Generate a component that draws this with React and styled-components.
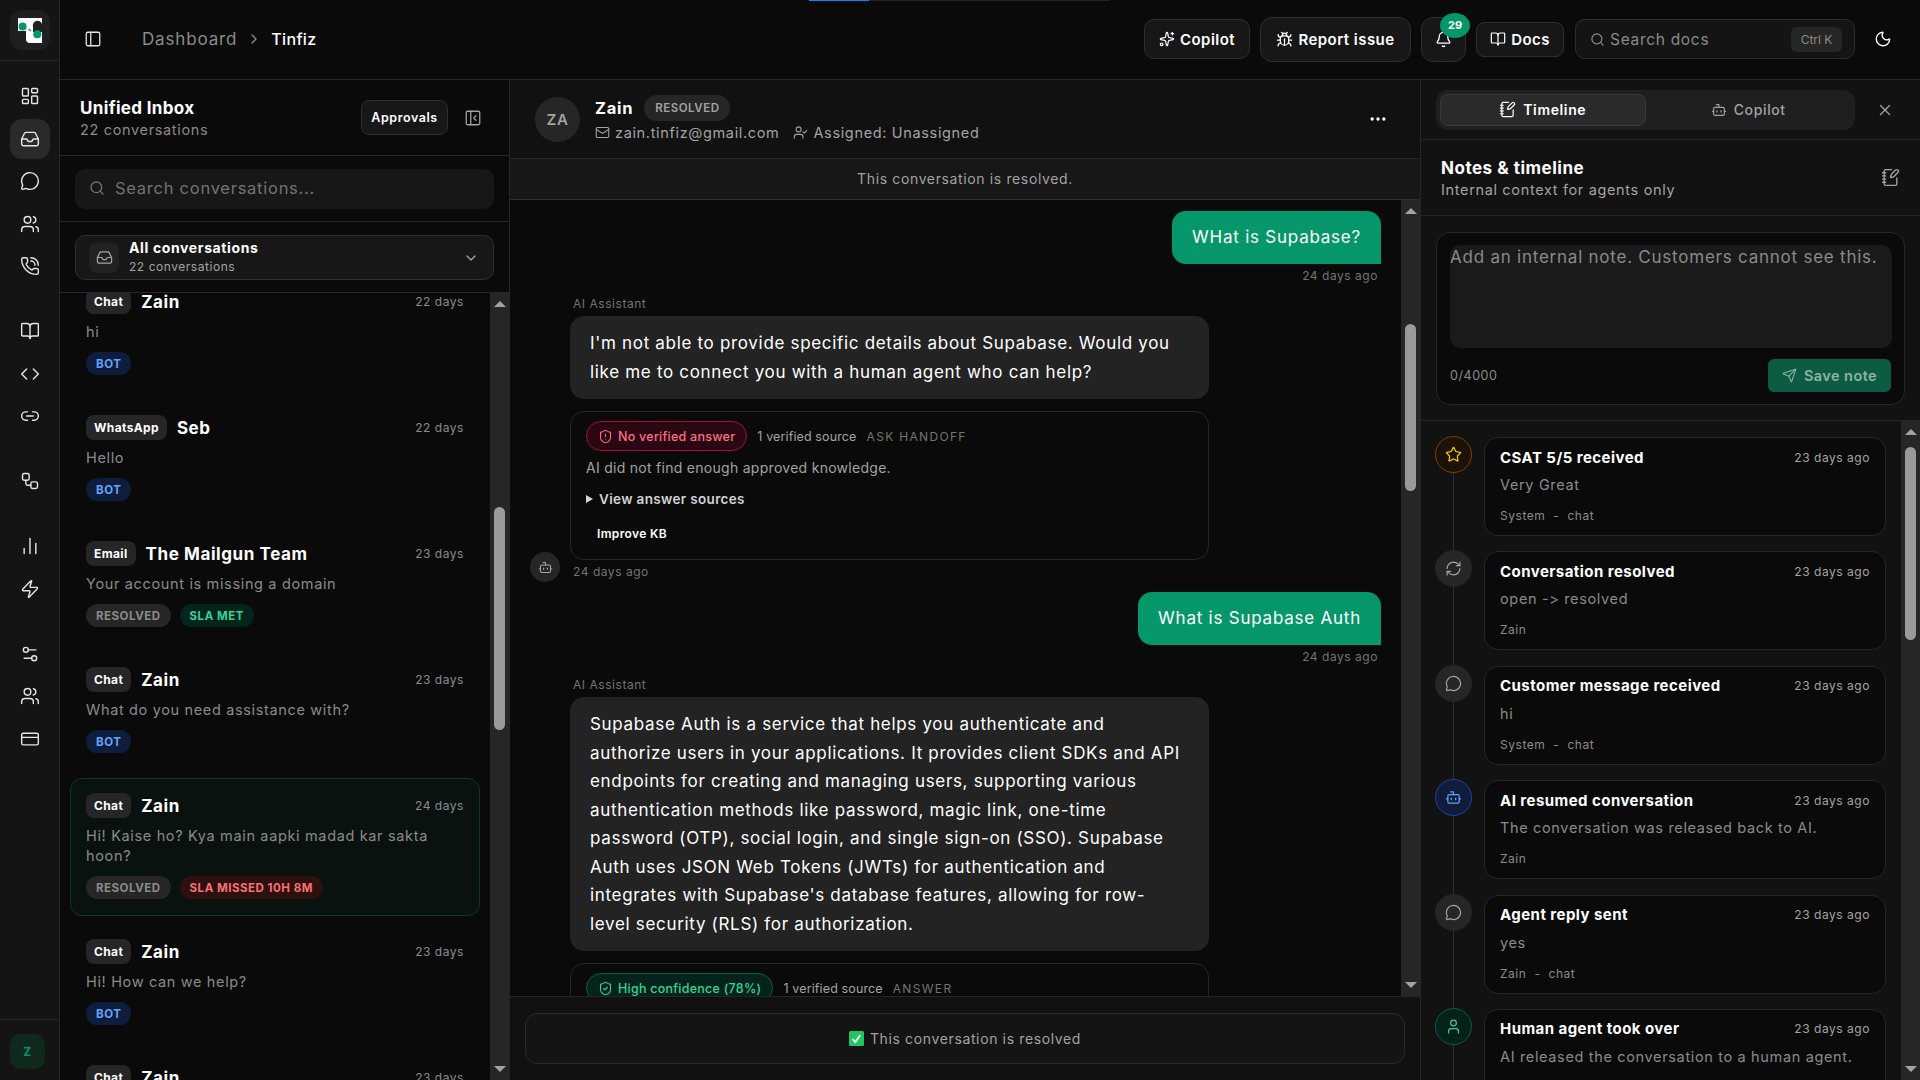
import styled, { createGlobalStyle } from "styled-components";
import {
  LayoutDashboard, Inbox, MessageCircle, Users, PhoneCall, BookOpen, Code, Link2, Workflow,
  ChartNoAxesColumn, Zap, Settings2, CreditCard, PanelLeft, PanelLeftClose, ChevronRight,
  ChevronDown, Sparkles, Bug, Bell, Search, Moon, NotebookPen, Bot, X, Ellipsis, Mail,
  UserCheck, ShieldAlert, ShieldCheck, Send, Star, RefreshCw, User,
} from "lucide-react";

const GlobalStyle = createGlobalStyle`
  html, body {
    margin: 0;
    height: 100%;
    background: #0a0a0a;
    overflow: hidden;
  }
  * {
    box-sizing: border-box;
    letter-spacing: 0.045em;
  }
  body {
    font-family: Inter, "Noto Sans", sans-serif;
    color: #fff;
  }
`;

const Shell = styled.div`
  position: relative;
  display: flex;
  width: 1920px;
  height: 1080px;
  overflow: hidden;
`;

const LoadingBar = styled.div`
  position: absolute;
  top: 0;
  left: 809px;
  width: 301px;
  height: 1px;
  background: #222;
  &::before {
    content: "";
    display: block;
    width: 60px;
    height: 1px;
    background: #0a84ff;
  }
`;

/* left rail */
const Rail = styled.nav`
  width: 60px;
  flex: none;
  display: flex;
  flex-direction: column;
  background: #141414;
  border-right: 1px solid #262626;
`;

const RailLogo = styled.div`
  height: 61px;
  flex: none;
  padding: 10px;
  border-bottom: 1px solid #262626;
`;

const LogoTile = styled.div`
  width: 40px;
  height: 40px;
  display: flex;
  align-items: center;
  justify-content: center;
  background: #1f1f1f;
  border-radius: 12px;
`;

const RailNav = styled.div`
  flex: 1;
  display: flex;
  flex-direction: column;
  gap: 25px;
  padding: 15px 9px 0 10px;
`;

const RailGroup = styled.div`
  display: flex;
  flex-direction: column;
  gap: 2.5px;
`;

const RailItem = styled.div`
  width: 40px;
  height: 40px;
  display: flex;
  align-items: center;
  justify-content: center;
  border-radius: 12px;
  color: #e5e5e5;
  background: ${({ $active }) => ($active ? "#2a2a2a" : "transparent")};
`;

const RailFoot = styled.div`
  height: 61px;
  flex: none;
  padding: 14px 10px;
  border-top: 1px solid #262626;
`;

const UserTile = styled.div`
  width: 35px;
  height: 35px;
  display: flex;
  align-items: center;
  justify-content: center;
  background: #10291f;
  border-radius: 10px;
  color: #059669;
  font-size: 12px;
  font-weight: 700;
`;

const Main = styled.div`
  flex: 1;
  min-width: 0;
  display: flex;
  flex-direction: column;
`;

/* top bar */
const TopBar = styled.header`
  height: 80px;
  flex: none;
  display: flex;
  align-items: center;
  padding: 0 28px 1px 24px;
  border-bottom: 1px solid #262626;
`;

const Crumbs = styled.div`
  display: flex;
  align-items: center;
  margin-left: 40px;
  font-size: 17px;
  letter-spacing: 0.05em;
  color: #8a8a8a;
`;

const Crumb = styled.span`
  font-size: 16px;
  color: #fff;
  font-weight: 500;
  letter-spacing: 0.02em;
`;

const CrumbSep = styled.span`
  display: flex;
  margin: 0 9px;
`;

const TopActions = styled.div`
  margin-left: auto;
  display: flex;
  align-items: center;
  gap: 10px;
`;

const TopButton = styled.div`
  position: relative;
  width: ${({ $w }) => $w}px;
  height: ${({ $h }) => $h}px;
  display: flex;
  align-items: center;
  justify-content: center;
  gap: 5px;
  background: #171717;
  border: 1px solid #2e2e2e;
  border-radius: ${({ $r }) => $r || 10}px;
  font-size: 15px;
  font-weight: 600;
  letter-spacing: 0.03em;
  white-space: nowrap;
`;

const NotifyBadge = styled.span`
  position: absolute;
  top: -5px;
  right: -5px;
  width: 30px;
  height: 25px;
  display: flex;
  align-items: center;
  justify-content: center;
  background: #059669;
  border-radius: 50%;
  font-size: 11px;
  font-weight: 700;
  letter-spacing: 0;
`;

const DocSearch = styled.div`
  width: 280px;
  height: 40px;
  margin-left: 1px;
  display: flex;
  align-items: center;
  gap: 5px;
  padding: 0 12px 0 14px;
  background: #141414;
  border: 1px solid #2e2e2e;
  border-radius: 10px;
  font-size: 15.500px;
  color: #8a8a8a;
`;

const Kbd = styled.span`
  margin-left: auto;
  width: 51px;
  height: 25px;
  display: flex;
  align-items: center;
  justify-content: center;
  background: #262626;
  border-radius: 6px;
  font-size: 12px;
  letter-spacing: 0;
`;

const ThemeToggle = styled.span`
  display: flex;
  margin-left: 9px;
`;

const Workspace = styled.div`
  flex: 1;
  min-height: 0;
  display: flex;
`;

/* scrollbars */
const Track = styled.div`
  width: 19px;
  flex: none;
  display: flex;
  flex-direction: column;
  align-items: center;
  padding: 8px 0;
  background: #262626;
`;

const Arrow = styled.span`
  flex: none;
  width: 0;
  height: 0;
  border-left: 6px solid transparent;
  border-right: 6px solid transparent;
  ${({ $down }) =>
    $down
      ? "border-top: 6px solid #a3a3a3; margin-top: auto;"
      : "border-bottom: 6px solid #a3a3a3;"}
`;

const Thumb = styled.span`
  flex: none;
  width: 11px;
  height: ${({ $h }) => $h}px;
  margin-top: ${({ $top }) => $top}px;
  background: #9a9a9a;
  border-radius: 6px;
`;

function Scrollbar({ top, size }) {
  return (
    <Track>
      <Arrow />
      <Thumb $top={top} $h={size} />
      <Arrow $down />
    </Track>
  );
}

/* inbox column */
const InboxPanel = styled.aside`
  width: 450px;
  flex: none;
  display: flex;
  flex-direction: column;
  border-right: 1px solid #262626;
`;

const InboxHead = styled.div`
  height: 76px;
  flex: none;
  display: flex;
  align-items: center;
  padding: 0 27px 0 20px;
  border-bottom: 1px solid #262626;
`;

const InboxTitle = styled.div`
  font-size: 17px;
  font-weight: 700;
  line-height: 24px;
  letter-spacing: 0.02em;
`;

const InboxSub = styled.div`
  font-size: 14.500px;
  line-height: 20px;
  color: #8a8a8a;
`;

const Approvals = styled.div`
  margin-left: auto;
  width: 87px;
  height: 35px;
  display: flex;
  align-items: center;
  justify-content: center;
  background: #171717;
  border: 1px solid #2e2e2e;
  border-radius: 8px;
  font-size: 12.500px;
  font-weight: 600;
`;

const CollapseIcon = styled.span`
  display: flex;
  margin-left: 16px;
  color: #a3a3a3;
`;

const SearchBar = styled.div`
  height: 66px;
  flex: none;
  padding: 13px 15px 0;
  border-bottom: 1px solid #262626;
`;

const SearchField = styled.div`
  height: 40px;
  display: flex;
  align-items: center;
  gap: 10px;
  padding: 0 14px 2px;
  background: #171717;
  border-radius: 10px;
  font-size: 16.500px;
  color: #737373;
`;

const FilterBar = styled.div`
  height: 71px;
  flex: none;
  padding: 13px 15px 0;
  border-bottom: 1px solid #262626;
`;

const FilterBox = styled.div`
  height: 45px;
  display: flex;
  align-items: center;
  gap: 10px;
  padding: 0 14px 0 13px;
  background: #171717;
  border: 1px solid #2e2e2e;
  border-radius: 10px;
`;

const FilterIcon = styled.span`
  width: 30px;
  height: 30px;
  display: flex;
  align-items: center;
  justify-content: center;
  background: #222;
  border-radius: 8px;
  color: #a3a3a3;
`;

const FilterTitle = styled.div`
  margin-bottom: 2px;
  font-size: 14px;
  font-weight: 700;
  line-height: 17px;
`;

const FilterSub = styled.div`
  margin-bottom: 2px;
  font-size: 12px;
  line-height: 17px;
  color: #a3a3a3;
`;

const FilterChevron = styled.span`
  display: flex;
  margin-left: auto;
  color: #a3a3a3;
`;

const ListWrap = styled.div`
  flex: 1;
  min-height: 0;
  display: flex;
`;

const ListViewport = styled.div`
  flex: 1;
  min-width: 0;
  overflow: hidden;
`;

const List = styled.div`
  display: flex;
  flex-direction: column;
  gap: 8px;
  margin-top: -19px;
  padding: 0 10px;
`;

const Item = styled.div`
  padding: 14px 15px 16px;
  border: 1px solid ${({ $selected }) => ($selected ? "#12332a" : "transparent")};
  border-radius: 12px;
  background: ${({ $selected }) => ($selected ? "#0a1210" : "transparent")};
`;

const ItemTop = styled.div`
  display: flex;
  align-items: center;
  height: 25px;
`;

const Channel = styled.span`
  height: 25px;
  display: flex;
  align-items: center;
  padding: 0 8px;
  margin-right: 10px;
  background: #262626;
  border-radius: 8px;
  font-size: 12px;
  font-weight: 700;
  letter-spacing: 0.03em;
`;

const ItemName = styled.span`
  font-size: 17px;
  font-weight: 700;
  letter-spacing: 0.035em;
`;

const ItemTime = styled.span`
  margin-left: auto;
  font-size: 12px;
  color: #8a8a8a;
`;

const Preview = styled.div`
  margin-top: 8px;
  font-size: 14.500px;
  line-height: 20px;
  color: #8a8a8a;
`;

const Tags = styled.div`
  display: flex;
  gap: 9px;
  margin-top: 10px;
`;

const tagColors = {
  bot: ["#0f1d3d", "#60a5fa"],
  resolved: ["#262626", "#8a8a8a"],
  met: ["#05241b", "#34d399"],
  missed: ["#2e1010", "#f87171"],
};

const Tag = styled.span`
  height: 23px;
  display: flex;
  align-items: center;
  padding: 0 10px;
  background: ${({ $kind }) => tagColors[$kind][0]};
  color: ${({ $kind }) => tagColors[$kind][1]};
  border-radius: 12px;
  font-size: 11.500px;
  font-weight: 700;
`;

const conversations = [
  { channel: "Chat", name: "Zain", time: "22 days", text: "hi", tags: [["bot", "BOT"]] },
  { channel: "WhatsApp", name: "Seb", time: "22 days", text: "Hello", tags: [["bot", "BOT"]] },
  {
    channel: "Email",
    name: "The Mailgun Team",
    time: "23 days",
    text: "Your account is missing a domain",
    tags: [["resolved", "RESOLVED"], ["met", "SLA MET"]],
  },
  { channel: "Chat", name: "Zain", time: "23 days", text: "What do you need assistance with?", tags: [["bot", "BOT"]] },
  {
    channel: "Chat",
    name: "Zain",
    time: "24 days",
    text: "Hi! Kaise ho? Kya main aapki madad kar sakta hoon?",
    tags: [["resolved", "RESOLVED"], ["missed", "SLA MISSED 10H 8M"]],
    selected: true,
  },
  { channel: "Chat", name: "Zain", time: "23 days", text: "Hi! How can we help?", tags: [["bot", "BOT"]] },
  { channel: "Chat", name: "Zain", time: "23 days", text: "", tags: [] },
];

/* conversation column */
const ChatPanel = styled.section`
  width: 910px;
  flex: none;
  display: flex;
  flex-direction: column;
  background: #111;
`;

const ChatHead = styled.div`
  height: 79px;
  flex: none;
  display: flex;
  align-items: center;
  gap: 15px;
  padding: 0 32px 0 25px;
  border-bottom: 1px solid #262626;
`;

const Avatar = styled.div`
  width: 45px;
  height: 45px;
  flex: none;
  display: flex;
  align-items: center;
  justify-content: center;
  background: #262626;
  border-radius: 50%;
  color: #a3a3a3;
  font-size: 15px;
  font-weight: 600;
`;

const HeadText = styled.div`
  margin-top: -3px;
`;

const HeadLine = styled.div`
  display: flex;
  align-items: center;
  gap: 11px;
  height: 26px;
`;

const HeadName = styled.span`
  font-size: 16.500px;
  font-weight: 700;
`;

const StatusPill = styled.span`
  height: 26px;
  display: flex;
  align-items: center;
  padding: 0 11px;
  background: #262626;
  border-radius: 13px;
  font-size: 11.500px;
  font-weight: 600;
  color: #a3a3a3;
`;

const HeadMeta = styled.div`
  display: flex;
  align-items: center;
  gap: 14px;
  margin-top: 3px;
  font-size: 14.500px;
  color: #a3a3a3;
`;

const MetaEntry = styled.span`
  display: flex;
  align-items: center;
  gap: 5px;
`;

const HeadMenu = styled.span`
  display: flex;
  margin-left: auto;
`;

const Banner = styled.div`
  height: 41px;
  flex: none;
  display: flex;
  align-items: center;
  justify-content: center;
  padding-bottom: 2px;
  background: #171717;
  border-bottom: 1px solid #2e2e2e;
  font-size: 14px;
  color: #a3a3a3;
`;

const ThreadWrap = styled.div`
  flex: 1;
  min-height: 0;
  display: flex;
  background: #0a0a0a;
`;

const Thread = styled.div`
  flex: 1;
  min-width: 0;
  overflow: hidden;
  display: flex;
  flex-direction: column;
  padding: 11px 20px 0;
`;

const UserMessage = styled.div`
  display: flex;
  flex-direction: column;
  align-items: flex-end;
  flex: none;
  margin-bottom: 12px;
`;

const UserBubble = styled.div`
  height: 53px;
  display: flex;
  align-items: center;
  padding: 0 20px 2px;
  background: #059669;
  border-radius: 14px 14px 0 14px;
  font-size: 17px;
  white-space: nowrap;
`;

const StampRight = styled.div`
  margin: 4px 3px 0 0;
  font-size: 12px;
  line-height: 16px;
  color: #737373;
`;

const AiMessage = styled.div`
  flex: none;
  display: flex;
  align-items: flex-end;
  gap: 10px;
  margin-bottom: 10px;
`;

const AiAvatar = styled.span`
  width: 30px;
  height: 30px;
  flex: none;
  display: flex;
  align-items: center;
  justify-content: center;
  background: #262626;
  border-radius: 50%;
  color: #a3a3a3;
`;

const AiBody = styled.div`
  width: 639px;
  flex: none;
`;

const AiLabel = styled.div`
  margin: 0 0 4px 3px;
  font-size: 12px;
  line-height: 16px;
  color: #737373;
`;

const AiBubble = styled.div`
  padding: 13px 26px 13px 20px;
  background: #232323;
  border-radius: 14px;
  font-size: 17px;
  line-height: 28.500px;
  letter-spacing: 0.04em;
`;

const AnswerCard = styled.div`
  margin-top: 12px;
  height: 149px;
  padding: 9px 15px;
  border: 1px solid #262626;
  border-radius: 14px;
`;

const AnswerTop = styled.div`
  display: flex;
  align-items: center;
  gap: 10px;
`;

const Confidence = styled.span`
  height: 30px;
  display: flex;
  align-items: center;
  gap: 5px;
  padding: 0 11px;
  border-radius: 15px;
  font-size: 12.500px;
  font-weight: 500;
  letter-spacing: 0.02em;
  border: 1px solid ${({ $ok }) => ($ok ? "#065f46" : "#9f1239")};
  background: ${({ $ok }) => ($ok ? "#04241b" : "#2a0712")};
  color: ${({ $ok }) => ($ok ? "#34d399" : "#fb7185")};
`;

const SourceCount = styled.span`
  font-size: 12.500px;
  letter-spacing: 0.01em;
  color: #a3a3a3;
`;

const SourceMode = styled.span`
  font-size: 12px;
  letter-spacing: 0.11em;
  color: #737373;
`;

const AnswerNote = styled.div`
  margin-top: 8px;
  font-size: 14px;
  line-height: 18px;
  letter-spacing: 0.02em;
  color: #a3a3a3;
`;

const SourcesToggle = styled.div`
  display: flex;
  align-items: center;
  gap: 6px;
  margin-top: 13px;
  font-size: 13.500px;
  line-height: 18px;
  font-weight: 600;
  letter-spacing: 0.025em;
  color: #d4d4d4;
`;

const Caret = styled.span`
  width: 0;
  height: 0;
  border-top: 4px solid transparent;
  border-bottom: 4px solid transparent;
  border-left: 7px solid #d4d4d4;
`;

const ImproveLink = styled.div`
  margin: 18px 0 0 11px;
  font-size: 12px;
  line-height: 16px;
  font-weight: 600;
  letter-spacing: 0.03em;
`;

const StampLeft = styled.div`
  margin: 4px 0 2px 3px;
  font-size: 12px;
  line-height: 16px;
  color: #737373;
`;

const ChatFoot = styled.div`
  height: 84px;
  flex: none;
  padding: 16px 15px 0;
  border-top: 1px solid #262626;
`;

const ResolvedBox = styled.div`
  height: 51px;
  width: 880px;
  display: flex;
  align-items: center;
  justify-content: center;
  gap: 6px;
  background: #141414;
  border: 1px solid #2a2a2a;
  border-radius: 12px;
  font-size: 14px;
  color: #a3a3a3;
`;

/* details column */
const DetailPanel = styled.aside`
  flex: 1;
  min-width: 0;
  display: flex;
  flex-direction: column;
  background: #121212;
  border-left: 1px solid #262626;
`;

const TabBar = styled.div`
  height: 60px;
  flex: none;
  display: flex;
  align-items: center;
  padding: 0 26px 0 15px;
  border-bottom: 1px solid #262626;
`;

const Tabs = styled.div`
  width: 419px;
  height: 40px;
  display: flex;
  padding: 4px;
  background: #1f1f1f;
  border-radius: 12px;
`;

const TabItem = styled.div`
  flex: 1;
  display: flex;
  align-items: center;
  justify-content: center;
  gap: 7px;
  border-radius: 8px;
  font-size: 14px;
  font-weight: ${({ $active }) => ($active ? 600 : 500)};
  color: ${({ $active }) => ($active ? "#fff" : "#a3a3a3")};
  background: ${({ $active }) => ($active ? "#2a2a2a" : "transparent")};
  border: 1px solid ${({ $active }) => ($active ? "#3a3a3a" : "transparent")};
`;

const CloseIcon = styled.span`
  display: flex;
  margin-left: auto;
  color: #a3a3a3;
`;

const NotesHead = styled.div`
  height: 76px;
  flex: none;
  display: flex;
  align-items: center;
  justify-content: space-between;
  padding: 0 20px 0 20px;
  border-bottom: 1px solid #262626;
  color: #a3a3a3;
`;

const NotesTitle = styled.div`
  font-size: 17px;
  line-height: 24px;
  font-weight: 700;
  letter-spacing: 0.03em;
  color: #fff;
`;

const NotesSub = styled.div`
  font-size: 14.500px;
  line-height: 20px;
  color: #a3a3a3;
`;

const Composer = styled.div`
  height: 205px;
  flex: none;
  padding: 16px 15px;
  border-bottom: 1px solid #262626;
`;

const ComposerBox = styled.div`
  height: 173px;
  padding: 12px 12px 12px 13px;
  background: #0a0a0a;
  border: 1px solid #262626;
  border-radius: 14px;
`;

const NoteField = styled.div`
  height: 103px;
  padding-top: 2px;
  background: #1a1a1a;
  border-radius: 10px;
  font-size: 17px;
  line-height: 21px;
  color: #8a8a8a;
`;

const ComposerRow = styled.div`
  display: flex;
  align-items: center;
  justify-content: space-between;
  margin-top: 11px;
  padding-right: 1px;
  font-size: 12.500px;
  color: #8a8a8a;
`;

const SaveButton = styled.div`
  width: 123px;
  height: 33px;
  display: flex;
  align-items: center;
  justify-content: center;
  gap: 7px;
  background: #0b5c42;
  border-radius: 6px;
  font-size: 14.500px;
  font-weight: 600;
  letter-spacing: 0.03em;
  color: #8fb3a3;
`;

const TimelineWrap = styled.div`
  flex: 1;
  min-height: 0;
  display: flex;
`;

const Timeline = styled.div`
  flex: 1;
  min-width: 0;
  overflow: hidden;
  display: flex;
  flex-direction: column;
  gap: 15.400px;
  padding: 16px 15px 0 14px;
`;

const TimelineRow = styled.div`
  position: relative;
  flex: none;
  display: flex;
  gap: 12px;
  &::before {
    content: "";
    position: absolute;
    left: 18px;
    top: 0;
    bottom: -16px;
    width: 1px;
    background: #2e2e2e;
  }
`;

const dotColors = {
  plain: ["#262626", "#262626", "#a3a3a3"],
  star: ["#1c1206", "#7c3f0a", "#facc15"],
  ai: ["#101c3a", "#1e40af", "#60a5fa"],
  human: ["#06201a", "#065f46", "#34d399"],
};

const Dot = styled.span`
  position: relative;
  width: 37px;
  height: 37px;
  flex: none;
  display: flex;
  align-items: center;
  justify-content: center;
  margin-top: -1px;
  border-radius: 50%;
  background: ${({ $kind }) => dotColors[$kind][0]};
  border: 1px solid ${({ $kind }) => dotColors[$kind][1]};
  color: ${({ $kind }) => dotColors[$kind][2]};
`;

const EventCard = styled.div`
  flex: none;
  width: 402px;
  height: 99px;
  padding: 9px 15px;
  background: #0a0a0a;
  border: 1px solid #262626;
  border-radius: 14px;
`;

const EventTop = styled.div`
  display: flex;
  align-items: center;
  justify-content: space-between;
  height: 20px;
`;

const EventTitle = styled.span`
  font-size: 15px;
  font-weight: 700;
  letter-spacing: 0.03em;
`;

const EventTime = styled.span`
  font-size: 12px;
  color: #a3a3a3;
`;

const EventText = styled.div`
  margin-top: 8px;
  font-size: 14.500px;
  line-height: 20px;
  color: #8a8a8a;
`;

const EventMeta = styled.div`
  display: flex;
  gap: 8px;
  margin-top: 13px;
  font-size: 12px;
  line-height: 16px;
  color: #8a8a8a;
`;

const events = [
  { kind: "star", Icon: Star, title: "CSAT 5/5 received", text: "Very Great", meta: ["System", "-", "chat"] },
  { kind: "plain", Icon: RefreshCw, title: "Conversation resolved", text: "open -> resolved", meta: ["Zain"] },
  { kind: "plain", Icon: MessageCircle, title: "Customer message received", text: "hi", meta: ["System", "-", "chat"] },
  { kind: "ai", Icon: Bot, title: "AI resumed conversation", text: "The conversation was released back to AI.", meta: ["Zain"] },
  { kind: "plain", Icon: MessageCircle, title: "Agent reply sent", text: "yes", meta: ["Zain", "-", "chat"] },
  { kind: "human", Icon: User, title: "Human agent took over", text: "AI released the conversation to a human agent.", meta: ["Zain"] },
];

const railGroups = [
  [LayoutDashboard, Inbox, MessageCircle, Users, PhoneCall],
  [BookOpen, Code, Link2],
  [Workflow],
  [ChartNoAxesColumn, Zap],
  [Settings2, Users, CreditCard],
];

function Logo() {
  return (
    <svg width="24" height="25" viewBox="0 0 24 25">
      <path d="M0 0h24v25H12a4 4 0 0 1-4-4v-8H0z" fill="#fff" />
      <path d="M15 14V9a4.500 4.500 0 0 1 9-3v8z" fill="#1f1f1f" />
      <circle cx="4.600" cy="8.600" r="4" fill="#059669" />
      <circle cx="19.300" cy="16.300" r="4" fill="#059669" />
      <path d="M10.500 11l2.500 2" stroke="#059669" strokeWidth="1.500" />
    </svg>
  );
}

function ResolvedCheck() {
  return (
    <svg width="15" height="15" viewBox="0 0 15 15">
      <rect width="15" height="15" rx="1.500" fill="#22c55e" />
      <path d="M3.500 8l2.800 3 5-7" fill="none" stroke="#fff" strokeWidth="1.800" />
    </svg>
  );
}

function App() {
  return (
    <Shell>
      <GlobalStyle />
      <Rail>
        <RailLogo>
          <LogoTile>
            <Logo />
          </LogoTile>
        </RailLogo>
        <RailNav>
          {railGroups.map((group, g) => (
            <RailGroup key={g}>
              {group.map((Icon, i) => (
                <RailItem key={i} $active={g === 0 && i === 1}>
                  <Icon size={20} strokeWidth={1.7} />
                </RailItem>
              ))}
            </RailGroup>
          ))}
        </RailNav>
        <RailFoot>
          <UserTile>Z</UserTile>
        </RailFoot>
      </Rail>

      <Main>
        <TopBar>
          <PanelLeft size={18} color="#e5e5e5" strokeWidth={1.7} />
          <Crumbs>
            Dashboard
            <CrumbSep>
              <ChevronRight size={16} />
            </CrumbSep>
            <Crumb>Tinfiz</Crumb>
          </Crumbs>
          <TopActions>
            <TopButton $w={106} $h={40}>
              <Sparkles size={16} strokeWidth={1.8} /> Copilot
            </TopButton>
            <TopButton $w={151} $h={45} $r={12}>
              <Bug size={17} strokeWidth={1.8} /> Report issue
            </TopButton>
            <TopButton $w={45} $h={45} $r={12}>
              <Bell size={17} strokeWidth={1.8} />
              <NotifyBadge>29</NotifyBadge>
            </TopButton>
            <TopButton $w={88} $h={35} $r={8}>
              <BookOpen size={16} strokeWidth={1.8} /> Docs
            </TopButton>
            <DocSearch>
              <Search size={15} /> Search docs
              <Kbd>Ctrl K</Kbd>
            </DocSearch>
            <ThemeToggle>
              <Moon size={18} strokeWidth={1.8} />
            </ThemeToggle>
          </TopActions>
        </TopBar>

        <Workspace>
          <InboxPanel>
            <InboxHead>
              <div>
                <InboxTitle>Unified Inbox</InboxTitle>
                <InboxSub>22 conversations</InboxSub>
              </div>
              <Approvals>Approvals</Approvals>
              <CollapseIcon>
                <PanelLeftClose size={18} strokeWidth={1.7} />
              </CollapseIcon>
            </InboxHead>
            <SearchBar>
              <SearchField>
                <Search size={16} /> Search conversations...
              </SearchField>
            </SearchBar>
            <FilterBar>
              <FilterBox>
                <FilterIcon>
                  <Inbox size={17} strokeWidth={1.7} />
                </FilterIcon>
                <div>
                  <FilterTitle>All conversations</FilterTitle>
                  <FilterSub>22 conversations</FilterSub>
                </div>
                <FilterChevron>
                  <ChevronDown size={16} />
                </FilterChevron>
              </FilterBox>
            </FilterBar>
            <ListWrap>
              <ListViewport>
                <List>
                  {conversations.map((c, i) => (
                    <Item key={i} $selected={c.selected}>
                      <ItemTop>
                        <Channel>{c.channel}</Channel>
                        <ItemName>{c.name}</ItemName>
                        <ItemTime>{c.time}</ItemTime>
                      </ItemTop>
                      <Preview>{c.text}</Preview>
                      <Tags>
                        {c.tags.map(([kind, label]) => (
                          <Tag key={kind} $kind={kind}>
                            {label}
                          </Tag>
                        ))}
                      </Tags>
                    </Item>
                  ))}
                </List>
              </ListViewport>
              <Scrollbar top={200} size={223} />
            </ListWrap>
          </InboxPanel>

          <ChatPanel>
            <ChatHead>
              <Avatar>ZA</Avatar>
              <HeadText>
                <HeadLine>
                  <HeadName>Zain</HeadName>
                  <StatusPill>RESOLVED</StatusPill>
                </HeadLine>
                <HeadMeta>
                  <MetaEntry>
                    <Mail size={15} strokeWidth={1.7} /> zain.tinfiz@gmail.com
                  </MetaEntry>
                  <MetaEntry>
                    <UserCheck size={15} strokeWidth={1.7} /> Assigned: Unassigned
                  </MetaEntry>
                </HeadMeta>
              </HeadText>
              <HeadMenu>
                <Ellipsis size={20} />
              </HeadMenu>
            </ChatHead>
            <Banner>This conversation is resolved.</Banner>
            <ThreadWrap>
              <Thread>
                <UserMessage>
                  <UserBubble>WHat is Supabase?</UserBubble>
                  <StampRight>24 days ago</StampRight>
                </UserMessage>
                <AiMessage>
                  <AiAvatar>
                    <Bot size={15} strokeWidth={1.7} />
                  </AiAvatar>
                  <AiBody>
                    <AiLabel>AI Assistant</AiLabel>
                    <AiBubble>
                      I'm not able to provide specific details about Supabase. Would you like me to connect you with a human agent who can help?
                    </AiBubble>
                    <AnswerCard>
                      <AnswerTop>
                        <Confidence>
                          <ShieldAlert size={15} strokeWidth={1.7} /> No verified answer
                        </Confidence>
                        <SourceCount>1 verified source</SourceCount>
                        <SourceMode>ASK HANDOFF</SourceMode>
                      </AnswerTop>
                      <AnswerNote>AI did not find enough approved knowledge.</AnswerNote>
                      <SourcesToggle>
                        <Caret /> View answer sources
                      </SourcesToggle>
                      <ImproveLink>Improve KB</ImproveLink>
                    </AnswerCard>
                    <StampLeft>24 days ago</StampLeft>
                  </AiBody>
                </AiMessage>
                <UserMessage>
                  <UserBubble>What is Supabase Auth</UserBubble>
                  <StampRight>24 days ago</StampRight>
                </UserMessage>
                <AiMessage>
                  <AiAvatar>
                    <Bot size={15} strokeWidth={1.7} />
                  </AiAvatar>
                  <AiBody>
                    <AiLabel>AI Assistant</AiLabel>
                    <AiBubble>
                      Supabase Auth is a service that helps you authenticate and authorize users in your applications. It provides client SDKs and API endpoints for creating and managing users, supporting various authentication methods like password, magic link, one-time password (OTP), social login, and single sign-on (SSO). Supabase Auth uses JSON Web Tokens (JWTs) for authentication and integrates with Supabase's database features, allowing for row-level security (RLS) for authorization.
                    </AiBubble>
                    <AnswerCard>
                      <AnswerTop>
                        <Confidence $ok>
                          <ShieldCheck size={15} strokeWidth={1.7} /> High confidence (78%)
                        </Confidence>
                        <SourceCount>1 verified source</SourceCount>
                        <SourceMode>ANSWER</SourceMode>
                      </AnswerTop>
                    </AnswerCard>
                    <StampLeft>24 days ago</StampLeft>
                  </AiBody>
                </AiMessage>
              </Thread>
              <Scrollbar top={110} size={167} />
            </ThreadWrap>
            <ChatFoot>
              <ResolvedBox>
                <ResolvedCheck /> This conversation is resolved
              </ResolvedBox>
            </ChatFoot>
          </ChatPanel>

          <DetailPanel>
            <TabBar>
              <Tabs>
                <TabItem $active>
                  <NotebookPen size={17} strokeWidth={1.7} /> Timeline
                </TabItem>
                <TabItem>
                  <Bot size={16} strokeWidth={1.7} /> Copilot
                </TabItem>
              </Tabs>
              <CloseIcon>
                <X size={18} strokeWidth={1.7} />
              </CloseIcon>
            </TabBar>
            <NotesHead>
              <div>
                <NotesTitle>Notes &amp; timeline</NotesTitle>
                <NotesSub>Internal context for agents only</NotesSub>
              </div>
              <NotebookPen size={19} strokeWidth={1.7} />
            </NotesHead>
            <Composer>
              <ComposerBox>
                <NoteField>Add an internal note. Customers cannot see this.</NoteField>
                <ComposerRow>
                  0/4000
                  <SaveButton>
                    <Send size={15} strokeWidth={1.7} /> Save note
                  </SaveButton>
                </ComposerRow>
              </ComposerBox>
            </Composer>
            <TimelineWrap>
              <Timeline>
                {events.map((e, i) => (
                  <TimelineRow key={i}>
                    <Dot $kind={e.kind}>
                      <e.Icon size={17} strokeWidth={1.7} />
                    </Dot>
                    <EventCard>
                      <EventTop>
                        <EventTitle>{e.title}</EventTitle>
                        <EventTime>23 days ago</EventTime>
                      </EventTop>
                      <EventText>{e.text}</EventText>
                      <EventMeta>
                        {e.meta.map((m, j) => (
                          <span key={j}>{m}</span>
                        ))}
                      </EventMeta>
                    </EventCard>
                  </TimelineRow>
                ))}
              </Timeline>
              <Scrollbar top={12} size={193} />
            </TimelineWrap>
          </DetailPanel>
        </Workspace>
      </Main>
      <LoadingBar />
    </Shell>
  );
}

export default App;
